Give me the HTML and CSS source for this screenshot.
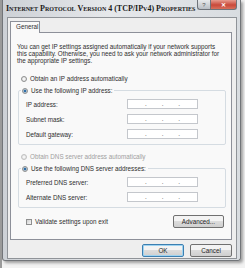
FILE: index.html
```html
<!DOCTYPE html>
<html>
<head>
    <link rel="stylesheet" href="styles.css">
</head>
<body>

<div class="window">
    <!-- Title bar -->
    <div class="titlebar">
        <span class="title">Internet Protocol Version 4 (TCP/IPv4) Properties</span>
        <div class="caption">
            <span class="cap-help">?</span>
            <span class="cap-close">&#10005;</span>
        </div>
    </div>

    <div class="client">
        <div class="tabs">
            <div class="tab">General</div>
        </div>

        <div class="panel">
            <p class="intro">You can get IP settings assigned automatically if your network supports this capability. Otherwise, you need to ask your network administrator for the appropriate IP settings.</p>

            <label class="radio"><span class="dot"></span>Obtain an IP address automatically</label>

            <fieldset class="group">
                <legend><label class="radio"><span class="dot on"></span>Use the following IP address:</label></legend>
                <div class="row"><span>IP address:</span><span class="ipbox"><i>.</i><i>.</i><i>.</i></span></div>
                <div class="row"><span>Subnet mask:</span><span class="ipbox"><i>.</i><i>.</i><i>.</i></span></div>
                <div class="row"><span>Default gateway:</span><span class="ipbox"><i>.</i><i>.</i><i>.</i></span></div>
            </fieldset>

            <label class="radio radio-dns disabled"><span class="dot"></span>Obtain DNS server address automatically</label>

            <fieldset class="group">
                <legend><label class="radio"><span class="dot on"></span>Use the following DNS server addresses:</label></legend>
                <div class="row"><span>Preferred DNS server:</span><span class="ipbox"><i>.</i><i>.</i><i>.</i></span></div>
                <div class="row"><span>Alternate DNS server:</span><span class="ipbox"><i>.</i><i>.</i><i>.</i></span></div>
            </fieldset>

            <div class="panel-foot">
                <label class="check"><span class="box"></span>Validate settings upon exit</label>
                <button class="btn btn-adv">Advanced...</button>
            </div>
        </div>

        <div class="buttons">
            <button class="btn btn-default">OK</button>
            <button class="btn">Cancel</button>
        </div>
    </div>
</div>

</body>
</html>
```

FILE: styles.css
```css
body {
    margin: 0;
    background: #f2f2f2;
    font-family: "Liberation Sans", Arial, sans-serif;
    color: #2e2e2e;
    border-left: 2px solid #9a9a9a;
    height: 268px;
    box-sizing: border-box;
}

.window {
    width: 239px;
    height: 261px;
    box-sizing: border-box;
    border: 1px solid #727579;
    border-top: none;
    border-radius: 0 0 3px 3px;
    background: linear-gradient(90deg, #cdd1d6, #e6e8eb 45%, #d8dce0);
    box-shadow: 2px 2px 3px rgba(0, 0, 0, 0.35);
}

.titlebar {
    height: 17px;
    display: flex;
    justify-content: space-between;
    align-items: flex-start;
}

.title {
    font-family: "Liberation Serif", serif;
    font-weight: bold;
    font-variant: small-caps;
    font-size: 8px;
    color: #1a1a1a;
    padding: 5px 0 0 3px;
    line-height: 8px;
    white-space: nowrap;
}

.caption {
    display: flex;
    margin-right: 3px;
}

.cap-help, .cap-close {
    height: 10px;
    line-height: 10px;
    font-size: 6px;
    text-align: center;
    border: 1px solid #6f737a;
    border-top: none;
    box-sizing: border-box;
}

.cap-help {
    width: 13px;
    background: linear-gradient(#e8eaec, #b9bec4);
    color: #555;
    border-radius: 0 0 0 3px;
    border-right: none;
}

.cap-close {
    width: 27px;
    background: linear-gradient(#e79c8f, #c9493a 55%, #d8705c);
    color: #fff;
    font-weight: bold;
    border-radius: 0 0 3px 0;
}

.client {
    margin: 0 3px 0 4px;
    height: 242px;
    box-sizing: border-box;
    border: 1px solid #8f9398;
    background: #eeeeee;
    padding: 3px 4px 0 2px;
    font-size: 6.3px;
}

.tabs {
    display: flex;
}

.tab {
    width: 30px;
    height: 12px;
    box-sizing: border-box;
    border: 1px solid #8d9099;
    border-bottom: none;
    background: #f9f9f9;
    line-height: 10px;
    padding-left: 5px;
    margin-bottom: -1px;
    position: relative;
}

.panel {
    height: 208px;
    box-sizing: border-box;
    border: 1px solid #8d9099;
    background: #f9f9f9;
    padding: 10px 5px 0 6px;
}

.intro {
    margin: 0;
    line-height: 7px;
}

.radio, .check {
    display: flex;
    align-items: center;
    line-height: 7px;
}

.panel > .radio {
    margin: 11px 0 0 4px;
}

.radio-dns.disabled {
    color: #a0a0a0;
    margin-top: 8px;
}

.dot {
    width: 6px;
    height: 6px;
    border-radius: 50%;
    border: 1px solid #8e8f8f;
    background: radial-gradient(#ffffff, #d6d6d6);
    margin-right: 3px;
    box-sizing: border-box;
}

.dot.on {
    background: radial-gradient(#2f6fa8 35%, #9fb8cc 45%, #e4e4e4);
}

.disabled .dot {
    border-color: #c0c0c0;
}

.group {
    margin: 5px 0 0 1px;
    padding: 0 6px 5px 7px;
    border: 1px solid #d5dce2;
    border-radius: 2px;
    display: grid;
    grid-template-columns: 101px 71px;
    row-gap: 5px;
}

.group legend {
    margin-left: -5px;
    padding: 0 2px 0 1px;
    margin-bottom: 5px;
}

.row {
    display: contents;
}

.row span:first-child {
    align-self: center;
}

.ipbox {
    height: 10px;
    box-sizing: border-box;
    border: 1px solid #c4c7cc;
    background: #fff;
    display: flex;
    justify-content: space-between;
    align-items: center;
    padding: 0 17px;
    color: #555;
}

.ipbox i {
    font-style: normal;
    line-height: 6px;
}

.panel-foot {
    display: flex;
    justify-content: space-between;
    align-items: center;
    margin-top: 7px;
    padding-left: 9px;
}

.box {
    width: 6px;
    height: 6px;
    box-sizing: border-box;
    border: 1px solid #8e8f8f;
    background: linear-gradient(135deg, #d0d0d0, #f6f6f6);
    margin-right: 3px;
}

.btn {
    font-family: "Liberation Sans", Arial, sans-serif;
    font-size: 6.3px;
    color: #262626;
    height: 13px;
    padding: 0;
    border: 1px solid #707070;
    border-radius: 2px;
    background: linear-gradient(#f3f3f3 45%, #dcdcdc 50%, #cfcfcf);
}

.btn-adv {
    width: 51px;
    margin-right: 2px;
}

.buttons {
    display: flex;
    justify-content: flex-end;
    gap: 6px;
    margin-top: 4px;
}

.buttons .btn {
    width: 42px;
}

.btn-default {
    border-color: #3c7fb1;
    box-shadow: inset 0 0 0 1px #9ed3f0;
}
```
